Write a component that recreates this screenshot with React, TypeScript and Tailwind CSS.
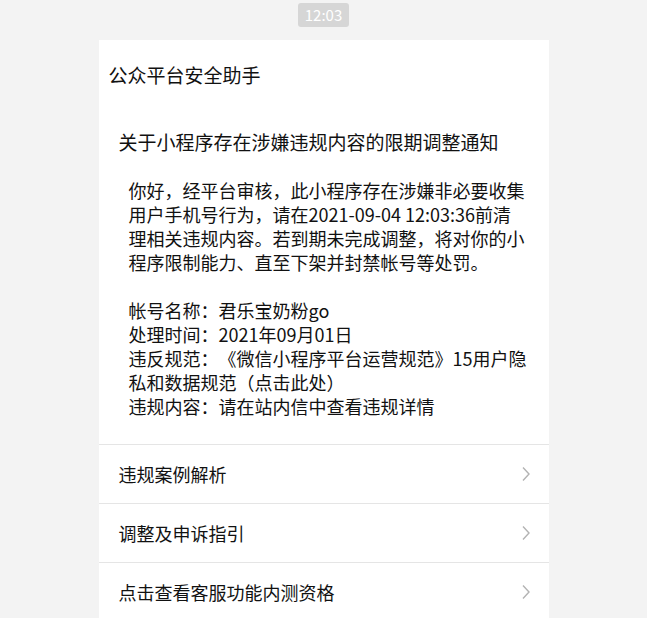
import React from "react";

const font = { fontFamily: '"Noto Sans CJK SC", "Noto Sans", sans-serif' };

function Chevron() {
  return (
    <svg width="8" height="16" viewBox="0 0 8 16" fill="none" className="shrink-0">
      <polyline points="1,1.5 7,8 1,14.5" stroke="#b3b3b3" strokeWidth="1.4" fill="none" />
    </svg>
  );
}

function Row({ label }: { label: string }) {
  return (
    <div className="flex h-[59px] items-center justify-between border-t border-[#e5e5e5] pl-[20px] pr-[19px]">
      <span className="text-[18px] leading-[24px] text-[#111]">{label}</span>
      <Chevron />
    </div>
  );
}

export default function App() {
  const body1 = [
    "你好，经平台审核，此小程序存在涉嫌非必要收集",
    "用户手机号行为，请在2021-09-04 12:03:36前清",
    "理相关违规内容。若到期未完成调整，将对你的小",
    "程序限制能力、直至下架并封禁帐号等处罚。",
  ];
  const body2 = [
    "帐号名称：君乐宝奶粉go",
    "处理时间：2021年09月01日",
    "违反规范：《微信小程序平台运营规范》15用户隐",
    "私和数据规范（点击此处）",
    "违规内容：请在站内信中查看违规详情",
  ];
  return (
    <div className="min-h-[618px] bg-[#f3f3f3] pt-[3px] [text-spacing-trim:space-all]" style={font}>
      <div className="mx-auto flex h-[24px] w-fit items-center rounded-[3px] bg-[#d6d6d6] px-[7px] text-[15px] text-white">
        12:03
      </div>
      <div className="mx-auto mt-[13px] w-[450px] bg-white">
        <div className="pl-[10px] pt-[23px] text-[19px] leading-[24px] text-[#111]">公众平台安全助手</div>
        <div className="mt-[43px] pl-[20px] text-[19px] leading-[24px] text-[#111]">
          关于小程序存在涉嫌违规内容的限期调整通知
        </div>
        <div className="mt-[24px] pb-[26px] pl-[30px] pr-[10px] text-[18px] leading-[24px] text-[#111]">
          {body1.map((l) => (
            <div key={l} className="whitespace-nowrap">{l}</div>
          ))}
          <div className="h-[24px]" />
          {body2.map((l) => (
            <div key={l} className="whitespace-nowrap">{l}</div>
          ))}
        </div>
        <Row label="违规案例解析" />
        <Row label="调整及申诉指引" />
        <Row label="点击查看客服功能内测资格" />
      </div>
    </div>
  );
}
